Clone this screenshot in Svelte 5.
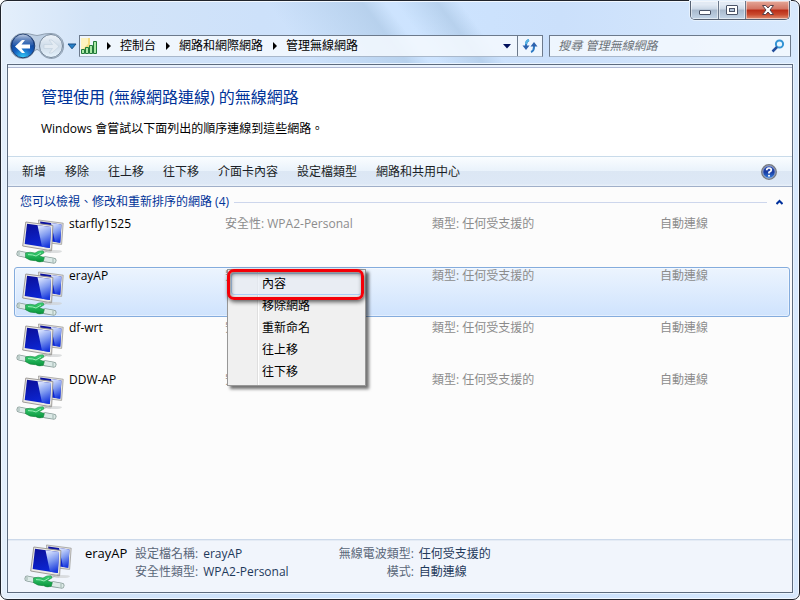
<script>
  const crumbs = ['控制台', '網路和網際網路', '管理無線網路'];
  const commands = ['新增', '移除', '往上移', '往下移', '介面卡內容', '設定檔類型', '網路和共用中心'];
  const networks = ['starfly1525', 'erayAP', 'df-wrt', 'DDW-AP'];
  const menuItems = ['內容', '移除網路', '重新命名', '往上移', '往下移'];
  let selected = $state(1);
</script>

{#snippet netIcon()}
  <svg class="net-icon" width="48" height="48" viewBox="0 0 48 48" aria-hidden="true">
    <defs>
      <linearGradient id="screen" x1="0" y1="0" x2="0.3" y2="1">
        <stop offset="0" stop-color="#0a0e98" />
        <stop offset="1" stop-color="#0c26d4" />
      </linearGradient>
      <linearGradient id="glare" x1="0.2" y1="0" x2="0.5" y2="1">
        <stop offset="0" stop-color="#dfe8ff" />
        <stop offset="0.5" stop-color="#7f9af0" />
        <stop offset="1" stop-color="#1838dc" />
      </linearGradient>
      <linearGradient id="plug" x1="0" y1="0" x2="0" y2="1">
        <stop offset="0" stop-color="#3fd478" />
        <stop offset="1" stop-color="#06923a" />
      </linearGradient>
    </defs>
    <ellipse cx="38" cy="35.500" rx="8" ry="1.600" fill="#cfd1d3" opacity=".7" />
    <path d="M22.500 4 47.200 7.200 45.600 28.400 24 26z" fill="#e4e2de" stroke="#9c9a98" stroke-width=".8" />
    <path d="M24.200 5.500 45.400 8.400 44.200 26.700 25 24z" fill="url(#screen)" />
    <path d="M35 7 45.400 8.400 44.200 26.700 39 25.800z" fill="url(#glare)" />
    <path d="M28 33h6l1 3.500-9-.5z" fill="#c9cacc" />
    <path d="M9.800 6 36.900 9.500 35.600 34.800 6.700 30z" fill="#eceae5" stroke="#95928f" stroke-width=".9" />
    <path d="M11 7.800 35 11 33.900 32 8.700 28z" fill="url(#screen)" />
    <path d="M21.500 9.200 35 11 33.900 32 26 30.700z" fill="url(#glare)" />
    <path d="M29 36q4-2 6-3" fill="none" stroke="#b3bab8" />
    <path d="M3.500 37.600 12 39.400M29 43.200l8.500 1.400" stroke="#8a9e9a" stroke-width="6" stroke-linecap="round" />
    <path d="M3.500 37.600 12 39.400M29 43.200l8.500 1.400" stroke="#dceae7" stroke-width="4.400" stroke-linecap="round" />
    <path d="M3 35.800v3.400M37 42.400v4.400" stroke="#9fb3af" />
    <path d="M9.500 37q4.500-1.500 9.500 0 4-3 8-2.200l1.200 2-5 3 5.200 1.700-1.200 4q-4.500 1.200-7.500-.8-5.500.6-10.200-3z" fill="url(#plug)" stroke="#127c34" stroke-width=".5" />
    <path d="M12 38.600q5 0 8 1.400l5-3" fill="none" stroke="#a4f3bd" stroke-width=".9" />
  </svg>
{/snippet}

<div class="window">
  <header class="glass">
    <div class="caption">
      <button aria-label="最小化">
        <svg width="14" height="12" viewBox="0 0 14 12"><rect x="1.500" y="6.500" width="11" height="4" rx=".5" fill="#fff" stroke="#4b5468" /></svg>
      </button>
      <button aria-label="最大化">
        <svg width="14" height="12" viewBox="0 0 14 12"><rect x="1.500" y="1.500" width="11" height="9" rx=".5" fill="#fff" stroke="#4b5468" /><rect x="4.500" y="4.500" width="5" height="3" fill="#b5c5da" stroke="#4b5468" /></svg>
      </button>
      <button class="close" aria-label="關閉">
        <svg width="14" height="12" viewBox="0 0 14 12"><path d="M1.500 1.500h3.300L7 4l2.200-2.500h3.300L9 6l3.500 4.500H9.200L7 8l-2.200 2.500H1.500L5 6z" fill="#fff" stroke="#54404a" /></svg>
      </button>
    </div>
    <nav class="navigation">
      <div class="travel">
        <svg class="cradle" width="56" height="28" viewBox="0 0 56 28" aria-hidden="true"><path d="M14 1.500q7 0 11 1.500 3 1 6 0 4-1.500 11-1.500a12.500 12.500 0 1 1-11 18q-3-4-6 0a12.500 12.500 0 1 1-11-18z" fill="#a9bdd3" fill-opacity=".6" stroke="#8f9fb0" /></svg>
        <button aria-label="上一頁">
          <svg width="26" height="26" viewBox="0 0 26 26">
            <defs>
              <radialGradient id="back" cx=".5" cy="1" r=".95"><stop offset="0" stop-color="#35d2fb" /><stop offset=".45" stop-color="#1560c0" /><stop offset="1" stop-color="#103078" /></radialGradient>
              <linearGradient id="shine" x1="0" y1="0" x2="0" y2="1"><stop offset="0" stop-color="#dce9f8" stop-opacity=".85" /><stop offset="1" stop-color="#4f80c8" stop-opacity=".2" /></linearGradient>
            </defs>
            <circle cx="13" cy="13" r="11.800" fill="url(#back)" stroke="#23406f" />
            <path d="M2.500 12a10.500 10.500 0 0 1 21 0q-10 3-21 0z" fill="url(#shine)" />
            <path d="M5 13.500 12 7h3l-3.500 4.500H20v4h-8.500L15 20h-3z" fill="#fff" />
          </svg>
        </button>
        <button aria-label="下一頁" disabled>
          <svg width="26" height="26" viewBox="0 0 26 26">
            <defs><linearGradient id="fwd" x1="0" y1="0" x2="0" y2="1"><stop offset="0" stop-color="#eef4fa" /><stop offset=".5" stop-color="#cfdce9" /><stop offset="1" stop-color="#e6f3fd" /></linearGradient></defs>
            <circle cx="13" cy="13" r="11.500" fill="url(#fwd)" stroke="#76879a" />
            <path d="M21 13.500 14 7h-3l3.500 4.500H6v4h8.500L11 20h3z" fill="#e3ebf3" stroke="#c0cedc" stroke-width=".6" />
          </svg>
        </button>
      </div>
      <button class="history" aria-label="最近的頁面">
        <svg width="10" height="7" viewBox="0 0 10 7"><path d="M1 1h8L5 5.800z" fill="#2580c8" stroke="#174f88" /></svg>
      </button>
      <div class="address">
        <svg width="16" height="18" viewBox="0 0 16 18" aria-hidden="true">
          <path d="M0 1h9v14H0z" fill="#f6dc82" /><path d="M0 1h7v6L0 14z" fill="#fdf3c0" />
          <path d="M.5 12.500h3v4h-3zM4.500 10.500h3v6h-3zM8.500 8.500h3v8h-3zM12.500 4.500h3v12h-3z" fill="#a8e8a4" stroke="#237a3a" />
        </svg>
        {#each crumbs as crumb}
          <svg class="arrow" width="6" height="8" viewBox="0 0 6 8" aria-hidden="true"><path d="M1 0 5 4 1 8z" fill="#000" /></svg>
          <a href="#top">{crumb}</a>
        {/each}
        <button class="drop" aria-label="先前的位置"><svg width="8" height="5" viewBox="0 0 8 5"><path d="M0 0h8L4 4.500z" fill="#00105c" /></svg></button>
        <button class="refresh" aria-label="重新整理">
          <svg width="16" height="16" viewBox="0 0 16 16"><path d="M7 2Q4 3 4 7v1M9 14q3-1 3-5V8" fill="none" stroke="#2d7ac4" stroke-width="2" /><path d="M.5 7.500h7L4 12zM8.500 8.500h7L12 4z" fill="#2c62ae" /><path d="M7 2Q4 3 4 6" fill="none" stroke="#55b4e4" stroke-width="2" /></svg>
        </button>
      </div>
      <label class="search">
        <input type="text" aria-label="搜尋" placeholder="搜尋 管理無線網路" />
        <svg width="14" height="14" viewBox="0 0 14 14" aria-hidden="true"><circle cx="8.500" cy="5" r="3.600" fill="#e8f6ff" stroke="#3494d4" stroke-width="2" /><path d="M6 8 1.500 12.500" stroke="#244f9c" stroke-width="2.500" /></svg>
      </label>
    </nav>
  </header>

  <main>
    <section class="intro">
      <h1>管理使用 (無線網路連線) 的無線網路</h1>
      <p>Windows 會嘗試以下面列出的順序連線到這些網路。</p>
    </section>

    <div class="toolbar">
      {#each commands as command}
        <button>{command}</button>
      {/each}
      <button class="help" aria-label="說明">
        <svg width="16" height="16" viewBox="0 0 16 16">
          <defs><linearGradient id="help" x1="0" y1="0" x2="0" y2="1"><stop offset="0" stop-color="#3c5cba" /><stop offset=".5" stop-color="#173aa0" /><stop offset="1" stop-color="#3a8ae8" /></linearGradient></defs>
          <circle cx="8" cy="8" r="7.200" fill="url(#help)" stroke="#777a80" stroke-width="1.500" /><circle cx="8" cy="8" r="6.200" fill="none" stroke="#c5cbd8" stroke-width=".7" />
          <path d="M5.700 6.300Q5.700 4 8 4t2.300 2Q10.300 7.200 8 8.300V9.500" fill="none" stroke="#fff" stroke-width="1.700" /><circle cx="8" cy="11.800" r="1" fill="#fff" />
        </svg>
      </button>
    </div>

    <section class="list">
      <h2>
        <span>您可以檢視、修改和重新排序的網路 (4)</span>
        <button aria-label="摺疊群組"><svg width="7" height="6" viewBox="0 0 7 6"><path d="M.5 5 3.500 2l3 3" fill="none" stroke="#00309c" stroke-width="2" /></svg></button>
      </h2>
      <ul>
        {#each networks as name, i}
          <li class:selected={selected === i}>
            {@render netIcon()}
            <div class="fields">
              <button class="name" onclick={() => (selected = i)}>{name}</button>
              <span>安全性: WPA2-Personal</span>
              <span>類型: 任何受支援的</span>
              <span>自動連線</span>
            </div>
            {#if selected === i}
              <div class="menu" role="menu">
                {#each menuItems as item, n}
                  <button role="menuitem" class:hot={n === 0}>{item}</button>
                {/each}
                <div class="marker"></div>
              </div>
            {/if}
          </li>
        {/each}
      </ul>
    </section>

    <footer>
      {@render netIcon()}
      <strong>{networks[selected]}</strong>
      <dl>
        <dt>設定檔名稱:</dt><dd>{networks[selected]}</dd>
        <dt>安全性類型:</dt><dd>WPA2-Personal</dd>
      </dl>
      <dl class="right">
        <dt>無線電波類型:</dt><dd>任何受支援的</dd>
        <dt>模式:</dt><dd>自動連線</dd>
      </dl>
    </footer>
  </main>
</div>

<style>
  :global(body) { margin: 0; background: #fff; }
  .window, .window * { box-sizing: border-box; }
  .window {
    display: flex;
    flex-direction: column;
    min-height: 100vh;
    padding: 0 6px 6px;
    border: 1px solid #20242c;
    border-radius: 7px;
    box-shadow: inset 0 0 0 1px #f2f8ff;
    background:
      linear-gradient(53deg, transparent 250px, #a9c5e299 326px, transparent 344px 352px, #a9c5e299 386px, transparent 404px) 0 0 / 700px 64px no-repeat,
      linear-gradient(90deg, #e4effb 0, #d3e4f8 90px, #cde1fa 260px, #cde4ff 420px, #cbe0fb 560px, #d8e9fd 100%);
    font: 12px/16px "Open Sans", "Noto Sans CJK TC", sans-serif;
    color: #000;
  }
  button {
    display: flex;
    align-items: center;
    justify-content: center;
    margin: 0;
    padding: 0;
    border: 0;
    background: none;
    font: inherit;
    color: inherit;
    white-space: nowrap;
  }
  svg { display: block; flex: none; }
  .glass { display: flex; flex-direction: column; }
  .caption {
    display: flex;
    align-self: flex-end;
    height: 19px;
    margin-right: 3px;
    border: 1px solid #576273;
    border-top: 0;
    border-radius: 0 0 5px 5px;
    overflow: hidden;
    box-shadow: 0 0 0 1px #e6f1fd;
  }
  .caption button {
    width: 27px;
    background: linear-gradient(#e2eaf4 0 20%, #cad7e6 45%, #a8b9cd 50%, #c3d5e8);
    box-shadow: inset 0 0 0 1px #ffffff80;
  }
  .caption button + button { border-left: 1px solid #6b788b; }
  .caption button.close {
    width: 44px;
    background: linear-gradient(#e5a899, #d27462 45%, #b92b16 50%, #c94a2e 75%, #e09074);
  }
  .navigation { display: flex; align-items: center; height: 44px; padding: 13px 2px 5px 3px; }
  .travel { position: relative; display: flex; gap: 2px; }
  .cradle { position: absolute; left: -1px; top: -1px; }
  .travel button { position: relative; }
  .history { width: 15px; height: 22px; }
  .address, .search {
    display: flex;
    align-items: center;
    height: 22px;
    border: 1px solid #6c7a8c;
    border-bottom-color: #a9b8cb;
    background: #f5f9fed9;
  }
  .address { flex: 460; padding-left: 1px; min-width: 0; }
  .address a { color: #000; text-decoration: none; white-space: nowrap; }
  .arrow { margin: 0 8px 0 9px; }
  .drop { width: 20px; height: 20px; margin-left: auto; }
  .refresh { width: 25px; height: 20px; border-left: 1px solid #6c7a8c; }
  .search { flex: 226; margin-left: 6px; padding: 0 5px 0 8px; min-width: 0; }
  .search input {
    flex: 1;
    min-width: 0;
    padding: 0;
    border: 0;
    outline: 0;
    background: none;
    font: italic 12px/16px "Open Sans", "Noto Sans CJK TC", sans-serif;
  }
  .search input::placeholder { color: #6c7278; opacity: 1; }
  main {
    flex: 1;
    display: flex;
    flex-direction: column;
    border: 1px solid #5d6b7e;
    box-shadow: 0 0 0 1px #e9f4ff;
    background: #fcfcfc;
  }
  .intro {
    padding: 20px 33px 19px;
    background: linear-gradient(#eaf3fe 2px, #b0b9d3 2px 3px, #fff 3px);
  }
  h1 { margin: 0 0 12px; font-size: 16px; line-height: 24px; font-weight: 400; color: #003399; }
  p { margin: 0; }
  .toolbar {
    display: flex;
    align-items: center;
    gap: 19px;
    height: 31px;
    padding: 0 15px 0 14px;
    border-top: 1px solid #c9dbea;
    border-bottom: 1px solid #a0afc9;
    background: linear-gradient(#fafdff, #e9f2fb 48%, #dce7f4 50%, #dde8f6 92%, #ebf2fa);
    color: #1a1e26;
  }
  .help { margin-left: auto; }
  .list { flex: 1; padding: 7px 2px 0 6px; }
  h2 {
    display: flex;
    align-items: center;
    gap: 5px;
    margin: 0 7px 5px 6px;
    font-size: 12px;
    line-height: 16px;
    font-weight: 400;
    color: #003399;
  }
  h2::after { content: ""; order: 1; flex: 1; height: 1px; background: #cdd6ec; }
  h2 button { order: 2; margin-left: 4px; }
  ul { display: flex; flex-direction: column; gap: 2px; margin: 0; padding: 0; list-style: none; }
  li {
    position: relative;
    display: flex;
    height: 50px;
    padding-left: 1px;
    border: 1px solid transparent;
    border-radius: 3px;
  }
  li.selected {
    border-color: #84acdd;
    background: linear-gradient(#ecf4fe, #cfe3fd);
    box-shadow: inset 0 0 0 1px #ffffff70;
    z-index: 1;
  }
  .fields {
    flex: 1;
    display: grid;
    grid-template-columns: 156fr 207fr 228fr 129fr;
    align-items: start;
    padding-left: 5px;
    color: #8c8c8c;
    white-space: nowrap;
  }
  .name { justify-content: flex-start; color: #000; }
  .menu {
    position: absolute;
    left: 212px;
    top: 1px;
    width: 139px;
    padding: 3px 3px 2px;
    border: 1px solid #979797;
    background: linear-gradient(90deg, #f0f0f0 29px, #dfdfdf 29px 30px, #fff 30px 31px, #f0f0f0 31px);
    box-shadow: 3px 3px 3px #0000008c;
  }
  .menu button { width: 100%; height: 22px; padding-left: 31px; justify-content: flex-start; }
  .menu .hot { border: 1px solid #aecff7; border-radius: 3px; padding-left: 30px; background: #e6ecf5aa; }
  .marker {
    position: absolute;
    left: -1px;
    top: -1px;
    width: 137px;
    height: 31px;
    border: 3px solid #f40008;
    border-radius: 7px;
    box-shadow: 1px 2px 4px #000000a0, inset 1px 2px 4px #00000080;
    pointer-events: none;
  }
  footer {
    display: flex;
    height: 53px;
    padding: 1px 8px 0 16px;
    border-top: 1px solid #ccd9ea;
    box-shadow: inset 0 1px #e4ebf5;
    background: #f1f5fc;
    line-height: 18px;
    white-space: nowrap;
  }
  footer strong { width: 50px; margin-left: 13px; padding-top: 3px; font-size: 13px; font-weight: 400; }
  footer dl { display: grid; grid-template-columns: auto 1fr; align-content: start; column-gap: 5px; margin: 0; padding-top: 4px; }
  footer dt { color: #5a6779; text-align: right; }
  footer dd { margin: 0; color: #1e395b; }
  footer .right { margin-left: 50px; }
</style>
